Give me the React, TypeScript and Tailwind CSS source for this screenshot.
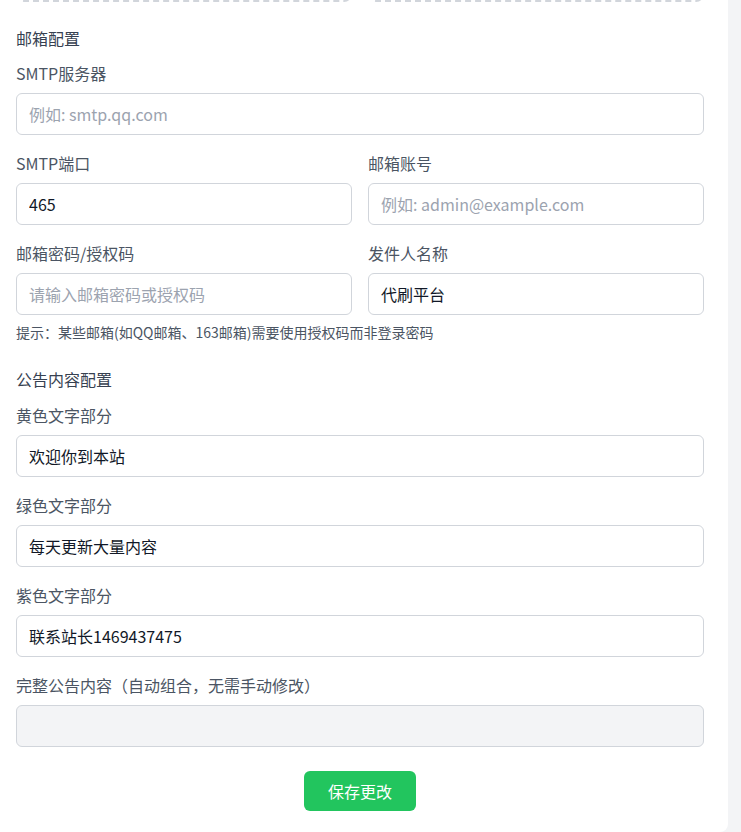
import React from "react";

const font = { fontFamily: '"Noto Sans CJK SC", "Noto Sans", sans-serif' };

function Label({ children }: { children: React.ReactNode }) {
  return <div className="mb-2 text-[16px] leading-6 text-[#4b5563]">{children}</div>;
}

function Input({ value, placeholder, disabled }: { value?: string; placeholder?: string; disabled?: boolean }) {
  return (
    <input
      readOnly
      disabled={disabled}
      defaultValue={value}
      placeholder={placeholder}
      className={
        "block h-[42px] w-full rounded-md border border-[#d1d5db] px-3 text-[16px] text-[#111827] outline-none placeholder:text-[#9ca3af] " +
        (disabled ? "bg-[#f3f4f6]" : "bg-white")
      }
      style={font}
    />
  );
}

export default function App() {
  return (
    <div className="flex h-[832px] w-[741px] overflow-hidden bg-[#f3f4f6]" style={font}>
      <div className="h-[832px] w-[728px] shrink-0 overflow-hidden rounded-br-lg bg-white pl-4 pr-[24px]">
        <div className="-mt-[98px] grid grid-cols-2 gap-4">
          <div className="h-[100px] rounded-lg border-2 border-dashed border-[#d1d5db]" />
          <div className="h-[100px] rounded-lg border-2 border-dashed border-[#d1d5db]" />
        </div>
        <div className="mt-[24px] text-[16px] leading-6 text-[#374151]">邮箱配置</div>
        <div className="mt-[11px]">
          <Label>SMTP服务器</Label>
          <Input placeholder="例如: smtp.qq.com" />
        </div>
        <div className="mt-4 grid grid-cols-2 gap-4">
          <div>
            <Label>SMTP端口</Label>
            <Input value="465" />
          </div>
          <div>
            <Label>邮箱账号</Label>
            <Input placeholder="例如: admin@example.com" />
          </div>
        </div>
        <div className="mt-4 grid grid-cols-2 gap-4">
          <div>
            <Label>邮箱密码/授权码</Label>
            <Input placeholder="请输入邮箱密码或授权码" />
          </div>
          <div>
            <Label>发件人名称</Label>
            <Input value="代刷平台" />
          </div>
        </div>
        <div className="mt-[7px] text-[14px] leading-5 text-[#4b5563]">
          提示：某些邮箱(如QQ邮箱、163邮箱)需要使用授权码而非登录密码
        </div>
        <div className="mt-[25px] text-[16px] leading-6 text-[#374151]">公告内容配置</div>
        <div className="mt-3">
          <Label>黄色文字部分</Label>
          <Input value="欢迎你到本站" />
        </div>
        <div className="mt-4">
          <Label>绿色文字部分</Label>
          <Input value="每天更新大量内容" />
        </div>
        <div className="mt-4">
          <Label>紫色文字部分</Label>
          <Input value="联系站长1469437475" />
        </div>
        <div className="mt-4">
          <Label>完整公告内容（自动组合，无需手动修改）</Label>
          <Input value="" disabled />
        </div>
        <div className="mt-6 flex justify-center">
          <button className="h-10 w-[112px] rounded-md bg-[#22c55e] text-[16px] text-white">保存更改</button>
        </div>
      </div>
    </div>
  );
}
